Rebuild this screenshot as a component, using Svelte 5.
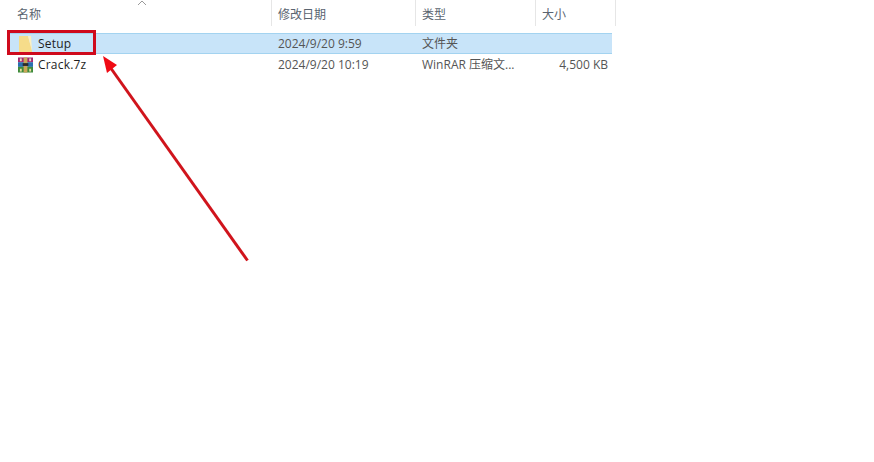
<script>
  const columns = ['名称', '修改日期', '类型', '大小'];
</script>

<div class="explorer">
  <svg class="sort" width="10" height="6" viewBox="0 0 10 6"><path d="M1 5 L5 1 L9 5" fill="none" stroke="#9a9a9a" stroke-width="1"/></svg>
  <div class="header">
    {#each columns as c}
      <div class="hcell">{c}</div>
    {/each}
  </div>
  <div class="list">
    <div class="row selected">
      <div class="name">
        <svg class="icon" width="15" height="18" viewBox="0 0 15 18">
          <path d="M1 1 H10 L14 16 V17 H1 Z" fill="#f6dc8a"/>
          <path d="M10 1 H13 L14 16 Z" fill="#fdf0c0"/>
        </svg>
        <span>Setup</span>
      </div>
      <div class="cell">2024/9/20 9:59</div>
      <div class="cell">文件夹</div>
      <div class="cell size"></div>
    </div>
    <div class="row">
      <div class="name">
        <svg class="icon" width="15" height="16" viewBox="0 0 16 16">
          <rect x="0" y="0" width="16" height="5" fill="#a5286e"/>
          <rect x="0" y="5" width="16" height="5" fill="#2a6fb0"/>
          <rect x="0" y="10" width="16" height="6" fill="#3d8a3a"/>
          <rect x="6" y="0" width="4" height="16" fill="#c9a557"/>
          <rect x="2" y="1" width="2" height="3" fill="#e8d6c0"/>
          <rect x="12" y="1" width="2" height="3" fill="#e8d6c0"/>
          <rect x="5" y="6" width="6" height="3" fill="#2b2b2b"/>
          <rect x="2" y="12" width="2" height="3" fill="#e8e0a0"/>
          <rect x="12" y="12" width="2" height="3" fill="#e8e0a0"/>
        </svg>
        <span>Crack.7z</span>
      </div>
      <div class="cell">2024/9/20 10:19</div>
      <div class="cell">WinRAR 压缩文...</div>
      <div class="cell size">4,500 KB</div>
    </div>
  </div>

  <div class="callout"></div>
  <svg class="arrow" width="874" height="462" viewBox="0 0 874 462">
    <line x1="247.500" y1="260.500" x2="110" y2="67" stroke="#d0141c" stroke-width="3"/>
    <path d="M103 56 L117 65 L107 73 Z" fill="#f00a14"/>
  </svg>
</div>

<style>
  :global(body) {
    margin: 0;
    background: #fff;
  }
  .explorer {
    position: relative;
    width: 874px;
    height: 462px;
    overflow: hidden;
    background: #fff;
    font-family: "Noto Sans CJK SC", "Liberation Sans", sans-serif;
    font-size: 12px;
    color: #3b3b3b;
  }
  .sort {
    position: absolute;
    left: 137px;
    top: 0;
  }
  .header {
    display: grid;
    grid-template-columns: 272px 144px 120px 80px;
    height: 26px;
    margin-bottom: 7px;
  }
  .hcell {
    box-sizing: border-box;
    padding-left: 6px;
    padding-top: 5px;
    line-height: 17px;
    color: #5a6470;
    border-right: 1px solid #e6e6e6;
  }
  .hcell:first-child {
    padding-left: 17px;
  }
  .list {
    margin-left: 9px;
    width: 603px;
  }
  .row {
    box-sizing: border-box;
    display: grid;
    grid-template-columns: 263px 144px 120px 76px;
    height: 21px;
    align-items: center;
    line-height: 19px;
  }
  .selected {
    background: #c8e4f9;
    border-top: 1px solid #a3d3f0;
    border-bottom: 1px solid #a3d3f0;
  }
  .name {
    display: flex;
    align-items: center;
    gap: 5px;
    padding-left: 9px;
    font-family: "Open Sans", "Noto Sans", sans-serif;
    color: #1e1e1e;
    font-size: 12px;
    letter-spacing: 0.2px;
  }
  .icon {
    flex: none;
  }
  .cell {
    padding-left: 6px;
    white-space: nowrap;
    font-family: "Open Sans", "Noto Sans CJK SC", sans-serif;
    font-size: 12px;
    color: #555;
  }
  .size {
    padding: 0 4px 0 0;
    text-align: right;
  }
  .callout {
    position: absolute;
    box-sizing: border-box;
    left: 7px;
    top: 30px;
    width: 89px;
    height: 25px;
    border: 3px solid #cf0a1c;
  }
  .arrow {
    position: absolute;
    left: 0;
    top: 0;
    pointer-events: none;
  }
</style>
